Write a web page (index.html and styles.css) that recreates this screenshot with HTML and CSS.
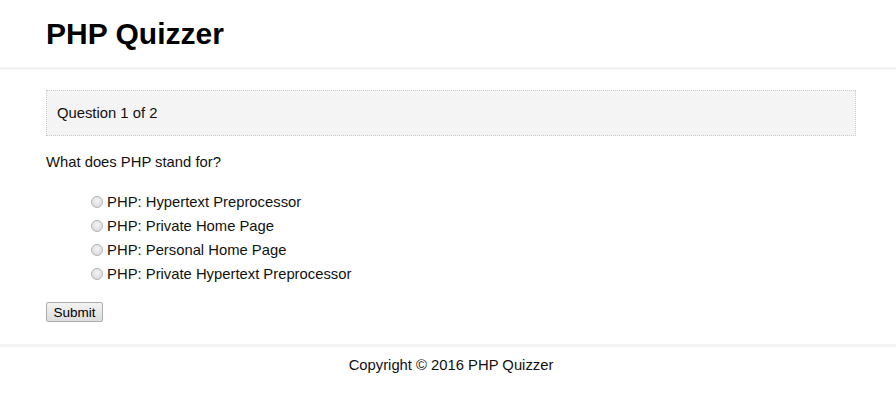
FILE: index.html
```html
<!DOCTYPE html>
<html>
<head>
<meta charset="utf-8">
<title>PHP Quizzer</title>
<link rel="stylesheet" href="styles.css">
</head>
<body>
<header class="site-header">
  <div class="container">
    <h1 class="site-title">PHP Quizzer</h1>
  </div>
</header>
<main class="site-main">
  <div class="container">
    <div class="current">Question 1 of 2</div>
    <p class="question">What does PHP stand for?</p>
    <form class="quiz-form">
      <ul class="choices">
        <li><label><input class="radio" type="radio" name="choice" value="1"> PHP: Hypertext Preprocessor</label></li>
        <li><label><input class="radio" type="radio" name="choice" value="2"> PHP: Private Home Page</label></li>
        <li><label><input class="radio" type="radio" name="choice" value="3"> PHP: Personal Home Page</label></li>
        <li><label><input class="radio" type="radio" name="choice" value="4"> PHP: Private Hypertext Preprocessor</label></li>
      </ul>
      <input class="submit" type="submit" value="Submit">
    </form>
  </div>
</main>
<footer class="site-footer">
  <div class="container">Copyright &copy; 2016 PHP Quizzer</div>
</footer>
</body>
</html>
```
FILE: styles.css
```css
html, body {
  margin: 0;
  padding: 0;
}
body {
  font-family: "Liberation Sans", Arial, sans-serif;
  font-size: 14.8px;
  color: #111;
  background: #fff;
}
.container {
  padding: 0 40px 0 46px;
}
.site-header {
  border-bottom: 3px solid #f3f3f3;
}
.site-title {
  margin: 0;
  padding: 16px 0 15px;
  font-size: 30px;
  line-height: 36px;
  font-weight: bold;
  color: #000;
}
.site-main {
  padding-top: 20px;
  padding-bottom: 22px;
  border-bottom: 3px solid #f3f3f3;
}
.current {
  background: #f4f4f4;
  border: 1px dotted #ccc;
  padding: 13px 10px;
  line-height: 18px;
}
.question {
  margin: 17px 0 0;
  line-height: 18px;
}
.choices {
  list-style: none;
  margin: 19px 0 0;
  padding: 0 0 0 45px;
}
.choices li {
  line-height: 24px;
  height: 24px;
}
.radio {
  -webkit-appearance: none;
  appearance: none;
  width: 12px;
  height: 12px;
  margin: 0 0 0 0;
  border: 1px solid #b4b4b4;
  border-radius: 50%;
  background: radial-gradient(circle at 50% 40%, #f2f2f2 0%, #e2e2e2 60%, #cfcfcf 100%);
  vertical-align: -1px;
  box-sizing: border-box;
}
.quiz-form {
  margin: 0;
}
.submit {
  margin-top: 16px;
  display: block;
  height: 20px;
  width: 57px;
  font-family: "Liberation Sans", Arial, sans-serif;
  font-size: 13.5px;
  padding: 0;
  border: 1px solid #adadad;
  border-radius: 2px;
  background: linear-gradient(#f3f3f3, #dddddd);
  color: #000;
}
.site-footer {
  text-align: center;
  padding: 9px 0;
  line-height: 18px;
}
```
